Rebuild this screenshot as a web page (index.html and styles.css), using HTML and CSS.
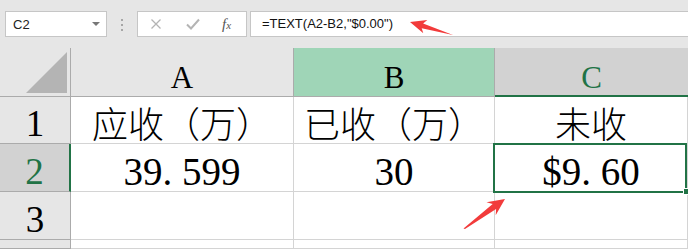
FILE: index.html
```html
<!DOCTYPE html>
<html lang="zh-CN">
<head>
    <meta charset="UTF-8">
    <title>TEXT 函数</title>
    <link rel="stylesheet" href="styles.css">
</head>
<body>
    <div class="toolbar">
        <div class="namebox">
            <span class="ref">C2</span>
            <span class="caret"></span>
        </div>
        <div class="grip"><i></i><i></i><i></i></div>
        <div class="fnbtns">
            <svg class="icon" width="12" height="12" viewBox="0 0 12 12">
                <path d="M1.5 1.5 L10.5 10.5 M10.5 1.5 L1.5 10.5" stroke="#b4b4b4" stroke-width="1.3" fill="none"/>
            </svg>
            <svg class="icon" width="14" height="12" viewBox="0 0 14 12">
                <path d="M1 6.5 L5 10.5 L13 1.5" stroke="#b4b4b4" stroke-width="2" fill="none"/>
            </svg>
            <span class="fx">f<sub>x</sub></span>
        </div>
        <div class="formula">=TEXT(A2-B2,"$0.00")</div>
    </div>

    <div class="sheet">
        <div class="corner">
            <svg width="70" height="48" viewBox="0 0 70 48">
                <polygon points="67,4 67,45 26,45" fill="#b4b4b4"/>
            </svg>
        </div>
        <div class="colhead">A</div>
        <div class="colhead hl">B</div>
        <div class="colhead sel">C</div>

        <div class="rowhead">1</div>
        <div class="cell cjk">应收（万）</div>
        <div class="cell cjk">已收（万）</div>
        <div class="cell cjk">未收</div>

        <div class="rowhead sel">2</div>
        <div class="cell num">39<span class="pt">.</span>599</div>
        <div class="cell num">30</div>
        <div class="cell num active">$9<span class="pt">.</span>60</div>

        <div class="rowhead">3</div>
        <div class="cell"></div>
        <div class="cell"></div>
        <div class="cell"></div>

        <div class="rowhead"></div>
        <div class="cell"></div>
        <div class="cell"></div>
        <div class="cell"></div>
    </div>

    <!-- callout arrows drawn over the sheet -->
    <svg class="marks" width="688" height="249" viewBox="0 0 688 249">
        <polygon points="410,22 427.3,19.9 423.1,23.4 453,35 421.7,28.2 423.3,33.3" fill="#f23b3b"/>
        <polygon points="505,199 486.5,202.3 492.7,204 463.5,228.5 465,229 496.1,209 495.7,215.3" fill="#f23b3b"/>
    </svg>
</body>
</html>
```

FILE: styles.css
```css
html, body {
    margin: 0;
    width: 688px;
    height: 249px;
    overflow: hidden;
    background: #fff;
}
body {
    position: relative;
    font-family: "Liberation Sans", Arial, sans-serif;
}

/* formula bar */
.toolbar {
    display: flex;
    align-items: flex-start;
    height: 48px;
    box-sizing: border-box;
    padding: 11px 0 0 5px;
    background: #e6e6e6;
}
.namebox {
    display: flex;
    align-items: center;
    justify-content: space-between;
    width: 102px;
    height: 26px;
    box-sizing: border-box;
    padding: 0 6px 0 7px;
    background: #fff;
    border: 1px solid #c6c6c6;
    font-size: 13px;
    color: #222;
}
.caret {
    width: 0;
    height: 0;
    border-left: 4px solid transparent;
    border-right: 4px solid transparent;
    border-top: 4px solid #777;
}
.grip {
    display: flex;
    flex-direction: column;
    gap: 3px;
    width: 30px;
    padding-top: 8px;
    align-items: center;
}
.grip i {
    width: 2px;
    height: 2px;
    background: #a6a6a6;
}
.fnbtns {
    display: flex;
    align-items: center;
    width: 110px;
    height: 26px;
    box-sizing: border-box;
    padding-left: 12px;
    gap: 24px;
    background: #fff;
    border: 1px solid #c6c6c6;
}
.icon {
    display: block;
}
.fx {
    font-family: "Liberation Serif", serif;
    font-style: italic;
    font-size: 15px;
    color: #555;
    margin-left: -2px;
}
.fx sub {
    font-size: 11px;
    vertical-align: 0;
}
.formula {
    flex: 1;
    height: 26px;
    box-sizing: border-box;
    margin-left: 3px;
    margin-right: -4px;
    padding: 4px 0 0 11px;
    background: #fff;
    border: 1px solid #c6c6c6;
    font-size: 13px;
    color: #111;
}

/* sheet grid */
.sheet {
    display: grid;
    grid-template-columns: 71px 223px 201px 193px;
    grid-template-rows: 49px 47px 48px 48px 9px;
    font-family: "Liberation Serif", "Noto Sans CJK SC", serif;
    color: #000;
}
.sheet > div {
    box-sizing: border-box;
    display: flex;
    align-items: flex-end;
    justify-content: center;
    line-height: 1;
}
.corner {
    background: #e6e6e6;
    border-right: 1px solid #ababab;
    border-bottom: 1px solid #ababab;
}
.corner svg {
    display: block;
    align-self: flex-start;
}
.colhead {
    background: #e6e6e6;
    border-right: 1px solid #ababab;
    border-bottom: 1px solid #ababab;
    font-size: 31px;
    padding-bottom: 3px;
}
.colhead.hl {
    background: #9fd5b7;
}
.colhead.sel {
    background: #d2d2d2;
    color: #217346;
    border-right: none;
    border-bottom: 2px solid #217346;
    padding-bottom: 2px;
}
.rowhead {
    background: #e6e6e6;
    border-right: 1px solid #ababab;
    border-bottom: 1px solid #ababab;
    font-size: 37px;
    padding-bottom: 1px;
}
.rowhead.sel {
    background: #d2d2d2;
    color: #217346;
    border-right: 2px solid #217346;
}
.cell {
    border-right: 1px solid #d4d4d4;
    border-bottom: 1px solid #d4d4d4;
}
.cjk {
    font-family: "Noto Sans CJK SC", sans-serif;
    font-weight: 300;
    font-size: 36px;
    padding-bottom: 3px;
}
.num {
    font-family: "Liberation Serif", serif;
    font-size: 39px;
}
.pt {
    display: inline-block;
    width: 0.5em;
    text-align: left;
}
.active {
    position: relative;
}
.active::after {
    content: "";
    position: absolute;
    top: -1px;
    left: -2px;
    right: 0;
    bottom: -2px;
    border: 2px solid #217346;
}
.active::before {
    content: "";
    position: absolute;
    right: -3px;
    bottom: -4px;
    width: 5px;
    height: 5px;
    background: #217346;
    border: 1px solid #fff;
    z-index: 1;
}

.marks {
    position: absolute;
    top: 0;
    left: 0;
    pointer-events: none;
}
```
